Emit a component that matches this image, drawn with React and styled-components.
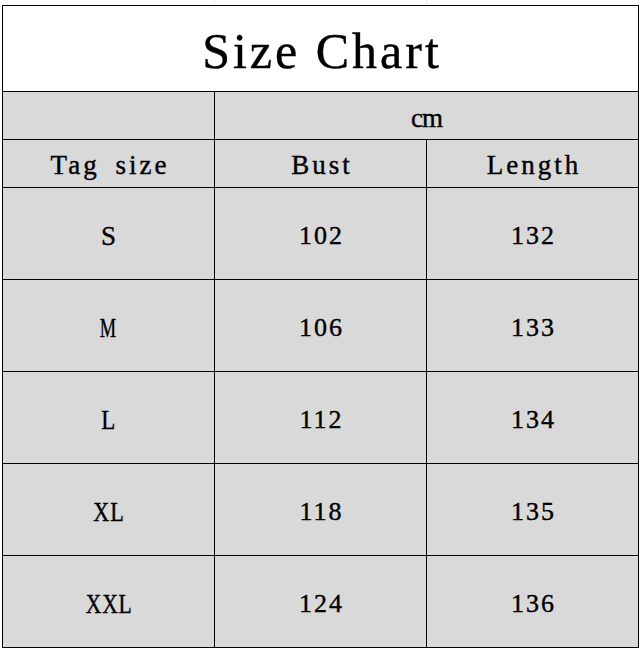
import React from 'react'
import styled, { createGlobalStyle } from 'styled-components'

const GlobalStyle = createGlobalStyle`
  * { box-sizing: border-box; }
  body {
    margin: 0;
    background: #fff;
    font-family: "Liberation Serif", "Times New Roman", serif;
    color: #000;
  }
`

const rows = [
	{ tag: 'S', bust: 102, length: 132, squeeze: 1 },
	{ tag: 'M', bust: 106, length: 133, squeeze: 0.68 },
	{ tag: 'L', bust: 112, length: 134, squeeze: 0.85 },
	{ tag: 'XL', bust: 118, length: 135, squeeze: 0.82 },
	{ tag: 'XXL', bust: 124, length: 136, squeeze: 0.8 },
]

const App = () => {
	return (
		<Page>
			<GlobalStyle />
			<Strip>
				<StripCell />
				<StripCell />
				<StripCell />
			</Strip>
			<Chart>
				<TitleCell>
					<Label $size={50} $track={3} $drop={5}>Size Chart</Label>
				</TitleCell>

				<Cell $h={48} />
				<Cell $h={48} $span={2}>
					<Label $size={27} $track={-1} $drop={6}>cm</Label>
				</Cell>

				<Cell $h={48}>
					<Label $size={27} $track={3} $words={6} $drop={4}>Tag size</Label>
				</Cell>
				<Cell $h={48}>
					<Label $size={27} $track={3} $drop={4}>Bust</Label>
				</Cell>
				<Cell $h={48}>
					<Label $size={27} $track={3} $drop={4}>Length</Label>
				</Cell>

				{rows.map(row => (
					<React.Fragment key={row.tag}>
						<Cell $h={92}>
							<Label $size={27} $track={1} $squeeze={row.squeeze} $drop={5}>{row.tag}</Label>
						</Cell>
						<Cell $h={92}>
							<Label $size={26} $track={2} $drop={5}>{row.bust}</Label>
						</Cell>
						<Cell $h={92}>
							<Label $size={26} $track={2} $drop={5}>{row.length}</Label>
						</Cell>
					</React.Fragment>
				))}
			</Chart>
		</Page>
	)
}

export default App

const Page = styled.div`
  width: 641px;
  padding-left: 2px;
`

const Strip = styled.div`
  display: grid;
  grid-template-columns: 213px 212px 212px;
  height: 5px;
`

const StripCell = styled.div`
  border-right: 1px solid #ececec;
`

const Chart = styled.div`
  display: grid;
  grid-template-columns: repeat(3, 212px);
  width: 637px;
  border-top: 1px solid #000;
  border-left: 1px solid #000;
`

const Cell = styled.div`
  grid-column: span ${p => p.$span || 1};
  height: ${p => p.$h}px;
  background: #d9d9d9;
  border-right: 1px solid #000;
  border-bottom: 1px solid #000;
  display: flex;
  align-items: center;
  justify-content: center;
`

const TitleCell = styled(Cell)`
  grid-column: 1 / -1;
  height: 86px;
  background: #fff;
`

const Label = styled.span`
  display: inline-block;
  font-size: ${p => p.$size}px;
  line-height: 1;
  letter-spacing: ${p => p.$track || 0}px;
  word-spacing: ${p => p.$words || 0}px;
  padding-left: ${p => p.$track || 0}px;
  padding-top: ${p => p.$drop || 0}px;
  transform: scaleX(${p => p.$squeeze || 1});
  white-space: nowrap;
  -webkit-text-stroke: 0.4px #000;
`
